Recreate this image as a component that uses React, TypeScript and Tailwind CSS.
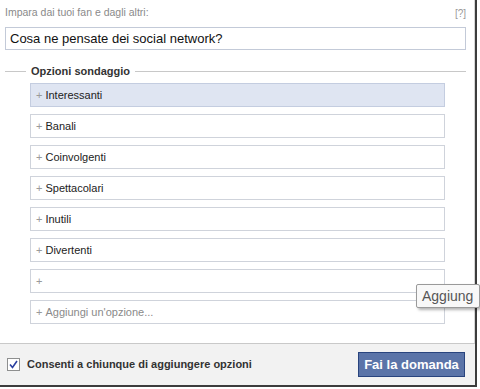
import React from 'react';

const options = ['Interessanti', 'Banali', 'Coinvolgenti', 'Spettacolari', 'Inutili', 'Divertenti', ''];

function OptionRow({ label, active, placeholder }: { label: string; active?: boolean; placeholder?: boolean }) {
  return (
    <div
      className={
        'flex h-[24px] items-center border pl-[5px] text-[11px] ' +
        (active ? 'border-[#c4cde0] bg-[#dfe5f2]' : 'border-[#cfd3db] bg-white')
      }
    >
      <span className="mr-[3px] text-[11px] text-[#9a9a9a]">+</span>
      <span className={placeholder ? 'text-[#8a8a8a]' : 'text-[#222]'}>{label}</span>
    </div>
  );
}

export default function App() {
  return (
    <div className="relative h-[389px] w-[480px] bg-white font-['Liberation_Sans',Arial,sans-serif]">
      <div className="flex h-[387px] w-[477px] flex-col border-b-[2px] border-r-[2px] border-[#3c3c3c]">
        <div className="flex flex-1 flex-col border-r border-[#d6d6d6] pl-[5px] pr-[5px]">
          <div className="mt-[6px] flex h-[14px] items-center justify-between pr-[3px] text-[11px] text-[#8a8a8a]">
            <span className="text-[10.5px]">Impara dai tuoi fan e dagli altri:</span>
            <span className="text-[10px] text-[#999]">[?]</span>
          </div>
          <div className="mt-[7px] flex h-[23px] w-[461px] items-center border border-[#c3cad8] pl-[4px] text-[13px] text-[#111]">
            Cosa ne pensate dei social network?
          </div>
          <div className="mt-[14px] flex h-[14px] w-[461px] items-center">
            <div className="h-px w-[21px] bg-[#c8c8c8]" />
            <span className="px-[5px] text-[11px] font-bold text-[#333]">Opzioni sondaggio</span>
            <div className="h-px flex-1 bg-[#c8c8c8]" />
          </div>
          <div className="ml-[25px] mt-[5px] flex w-[415px] flex-col gap-[7px]">
            {options.map((o, i) => (
              <OptionRow key={i} label={o} active={i === 0} />
            ))}
            <OptionRow label="Aggiungi un'opzione..." placeholder />
          </div>
        </div>
        <div className="flex h-[42px] items-center justify-between border-t border-[#c9c9c9] bg-[#f2f2f2] pl-[7px] pr-[10px]">
          <div className="flex items-center">
            <svg width="13" height="13" viewBox="0 0 13 13" className="mr-[7px]">
              <rect x="0.5" y="0.5" width="12" height="12" fill="#fff" stroke="#8e8f8f" />
              <path d="M3 6.5 L5.5 9.5 L10 3" fill="none" stroke="#2a3fa0" strokeWidth="1.6" />
            </svg>
            <span className="text-[11px] font-bold text-[#333]">Consenti a chiunque di aggiungere opzioni</span>
          </div>
          <div className="flex h-[25px] w-[107px] items-center justify-center border border-[#29447e] bg-[#5b74a8] text-[13px] font-bold text-white">
            Fai la domanda
          </div>
        </div>
      </div>
      <div className="absolute left-[416px] top-[284px] flex h-[24px] w-[64px] items-center rounded-[2px] border border-[#9a9a9a] bg-[#f8f8f8] pl-[5px] text-[14px] text-[#555] shadow-[2px_2px_3px_rgba(0,0,0,0.3)]">
        Aggiung
      </div>
    </div>
  );
}
